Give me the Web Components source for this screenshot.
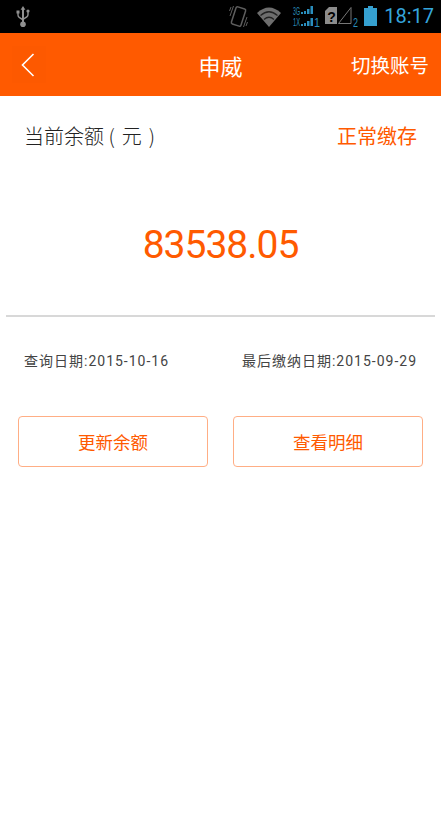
<!DOCTYPE html>
<html>
<head>
<meta charset="utf-8">
<style>
  html, body { margin:0; padding:0; background:#fff; }
  body { font-family:Roboto, "Noto Sans CJK SC", sans-serif; width:441px; height:839px; overflow:hidden; }
  .actions { display:flex; gap:25px; padding:0 18px; }
</style>
</head>
<body>
<status-bar></status-bar>
<title-bar heading="申威" action="切换账号"></title-bar>
<balance-panel amount="83538.05" state="正常缴存"></balance-panel>
<date-row query="查询日期:2015-10-16" last="最后缴纳日期:2015-09-29"></date-row>
<div class="actions">
  <outline-button>更新余额</outline-button>
  <outline-button>查看明细</outline-button>
</div>

<script>
// status bar, every svg is 33 high so its y values are the screen's
var template_status = document.createElement("template");
template_status.innerHTML = `
<style>
  :host { display:flex; height:33px; background:#000; padding:0 7px 0 16px; box-sizing:border-box; }
  svg { display:block; flex:none; }
  .usb { margin-right:auto; }
  .clock { color:#35a5dc; font:20px/33px Roboto, sans-serif; margin-left:7px; }
  text { font-family:"Liberation Sans", sans-serif; }
</style>
<svg class="usb" width="14" height="33" viewBox="0 0 14 33">
  <path d="M7 6l2.400 3.800H8V22H6V9.800H4.600z" fill="#909090"/>
  <circle cx="7" cy="24.300" r="2.800" fill="#909090"/>
  <path d="M2 12.500v2.500q0 1.500 1.200 2.300L7 19.800M12 11.500v3q0 1.500-1.200 2.300L7 19.300" fill="none" stroke="#909090" stroke-width="1.400"/>
  <rect x=".5" y="10.500" width="3" height="3" fill="#909090"/>
  <circle cx="12" cy="11" r="1.600" fill="#909090"/>
</svg>
<svg width="19" height="33" viewBox="0 0 19 33" fill="none" stroke="#5e5e5e">
  <rect x="4.500" y="7.500" width="10" height="18" rx="1.500" stroke-width="1.500" transform="rotate(18 9.500 16.500)"/>
  <path d="M4.500 6L1 16M2 7L.5 11M14.500 27L18 17M17 26l1.500-4" stroke-width="1"/>
</svg>
<svg width="24" height="33" viewBox="0 0 24 33" style="margin-left:9px">
  <path d="M0 13Q12 2 24 13L12 27z" fill="#6e6e6e"/>
  <path d="M3.500 15.500Q12 8 20.500 15.500M7 19.500Q12 15 17 19.500" fill="none" stroke="#222" stroke-width="1.200"/>
</svg>
<svg width="28" height="33" viewBox="0 0 28 33" style="margin-left:11px" fill="#2a8ebd">
  <text x="1" y="14.500" font-size="11" textLength="7" lengthAdjust="spacingAndGlyphs">3G</text>
  <text x="1" y="26" font-size="11" textLength="7" lengthAdjust="spacingAndGlyphs">1X</text>
  <path d="M9 12h2v2H9zM12 11h2v3h-2zM15 9h2.500v5H15zM18.500 6H21v8h-2.500z"/>
  <path d="M9 24h2v2H9zM12 23h2v3h-2zM15 21h2.500v5H15zM18.500 18H21v8h-2.500z"/>
  <text x="22" y="27" font-size="12" textLength="6" lengthAdjust="spacingAndGlyphs">1</text>
</svg>
<svg width="36" height="33" viewBox="0 0 36 33" style="margin-left:5px;margin-right:-3px">
  <path d="M0 11l4-4h8v17H0z" fill="#8c8c8c"/>
  <text x="2.200" y="21.500" font-size="14" font-weight="bold" fill="#000">?</text>
  <path d="M13.500 23.500L26 7.500v16z" fill="none" stroke="#777" stroke-width="1"/>
  <text x="28" y="27" font-size="12" fill="#2a8ebd" textLength="5" lengthAdjust="spacingAndGlyphs">2</text>
</svg>
<svg width="13" height="33" viewBox="0 0 13 33" style="margin-left:6px" fill="#35a0d0">
  <path d="M4 6h5v2h4v18H0V8h4z"/>
</svg>
<span class="clock">18:17</span>
`;
class StatusBar extends HTMLElement {
  constructor(){ super(); this.attachShadow({mode:"open"}); }
  connectedCallback(){ this.shadowRoot.appendChild(template_status.content.cloneNode(true)); }
}
customElements.define("status-bar", StatusBar);

// orange title bar
var template_title = document.createElement("template");
template_title.innerHTML = `
<style>
  :host { display:grid; grid-template-columns:1fr auto 1fr; align-items:center; height:63px; background:#ff5a00; color:#fff; font-family:"Noto Sans CJK SC", sans-serif; }
  .back { margin-left:12px; width:34px; height:37px; box-sizing:border-box; padding-left:9px; display:flex; align-items:center; background:#fd5900; }
  #heading { font-size:22px; }
  #action { font-size:19.500px; justify-self:end; padding-right:12px; white-space:nowrap; }
</style>
<div class="back">
  <svg width="14" height="24" viewBox="0 0 14 24" fill="none" stroke="#fff" stroke-width="1.600"><path d="M12.500 1L1.500 12l11 11"/></svg>
</div>
<div id="heading"></div>
<div id="action"></div>
`;
class TitleBar extends HTMLElement {
  constructor(){ super(); this.attachShadow({mode:"open"}); }
  connectedCallback(){
    this.shadowRoot.appendChild(template_title.content.cloneNode(true));
    this.shadowRoot.querySelector("#heading").innerText = this.getAttribute("heading");
    this.shadowRoot.querySelector("#action").innerText = this.getAttribute("action");
  }
}
customElements.define("title-bar", TitleBar);

// balance block
var template_balance = document.createElement("template");
template_balance.innerHTML = `
<style>
  :host { display:block; margin:0 6px; border-bottom:2px solid #d8d8d8; height:221px; box-sizing:border-box; font-family:"Noto Sans CJK SC", sans-serif; }
  .top { display:flex; justify-content:space-between; align-items:center; padding:23px 18px 0; height:32px; font-size:20px; }
  .label { color:#222; white-space:pre; font-weight:300; }
  .paren { margin:0 7px; }
  #state { color:#ff5a00; }
  #amount { text-align:center; color:#ff5a00; font:39px/48px Roboto, sans-serif; letter-spacing:-1px; margin-top:70px; }
</style>
<div class="top"><span class="label">当前余额 (<span class="paren">元</span>)</span><span id="state"></span></div>
<div id="amount"></div>
`;
class BalancePanel extends HTMLElement {
  constructor(){ super(); this.attachShadow({mode:"open"}); }
  connectedCallback(){
    this.shadowRoot.appendChild(template_balance.content.cloneNode(true));
    this.shadowRoot.querySelector("#state").innerText = this.getAttribute("state");
    this.shadowRoot.querySelector("#amount").innerText = this.getAttribute("amount");
  }
}
customElements.define("balance-panel", BalancePanel);

// the two dates
var template_dates = document.createElement("template");
template_dates.innerHTML = `
<style>
  :host { display:flex; justify-content:space-between; align-items:center; height:86px; margin-bottom:13px; padding:0 24px; color:#444; font:14px Roboto, "Noto Sans CJK SC", sans-serif; letter-spacing:1px; }
</style>
<span id="query"></span><span id="last"></span>
`;
class DateRow extends HTMLElement {
  constructor(){ super(); this.attachShadow({mode:"open"}); }
  connectedCallback(){
    this.shadowRoot.appendChild(template_dates.content.cloneNode(true));
    this.shadowRoot.querySelector("#query").innerText = this.getAttribute("query");
    this.shadowRoot.querySelector("#last").innerText = this.getAttribute("last");
  }
}
customElements.define("date-row", DateRow);

// outlined button
var template_btn = document.createElement("template");
template_btn.innerHTML = `
<style>
  :host { display:flex; flex:1; height:51px; box-sizing:border-box; align-items:center; justify-content:center; border:1px solid #ffae85; border-radius:4px; color:#ff5a00; font:17.500px "Noto Sans CJK SC", sans-serif; }
</style>
<slot></slot>
`;
class OutlineButton extends HTMLElement {
  constructor(){ super(); this.attachShadow({mode:"open"}); }
  connectedCallback(){ this.shadowRoot.appendChild(template_btn.content.cloneNode(true)); }
}
customElements.define("outline-button", OutlineButton);
</script>
</body>
</html>
